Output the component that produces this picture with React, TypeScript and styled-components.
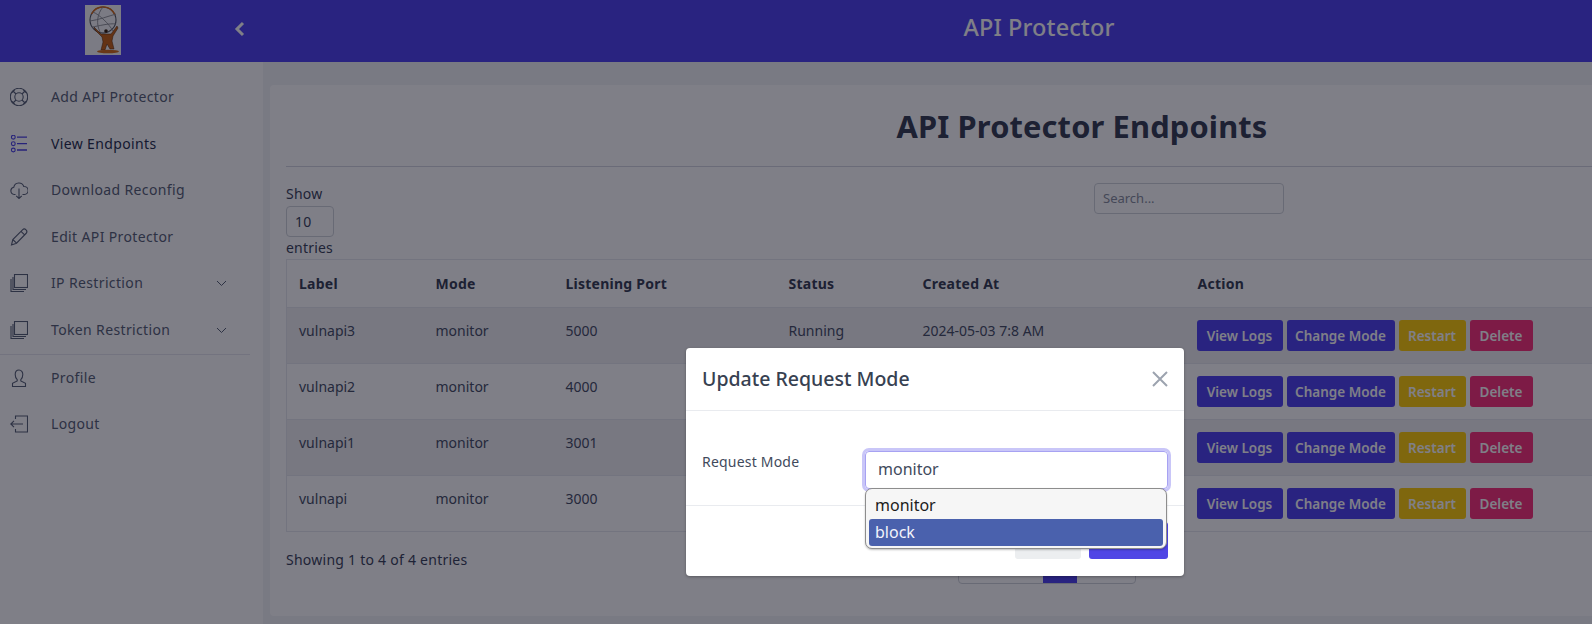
import React from "react";
import styled, { createGlobalStyle } from "styled-components";

const Global = createGlobalStyle`
  html, body { margin: 0; padding: 0; width: 1592px; height: 624px; overflow: hidden; background: #fff; }
  body { font-family: "Noto Sans", "Open Sans", sans-serif; font-size: 14px; line-height: 21px; color: #4a5568; }
  * { box-sizing: border-box; }
`;

const Page = styled.div`position: relative; width: 1592px; height: 624px; overflow: hidden;`;
const TopBar = styled.header`display: flex; align-items: stretch; height: 62px; background: #5246f0;`;
const Brand = styled.div`display: flex; align-items: center; width: 263px; padding-left: 85px;`;
const LogoMark = styled.svg`flex: none; width: 36px; height: 50px; margin-top: -2px;`;
const Collapse = styled.svg`margin-left: 113px; margin-top: -4px; width: 12px; height: 16px;`;
const AppTitle = styled.div`flex: 1; padding: 11px 0 0 223px; text-align: center; font-size: 23.5px; line-height: 32px; font-weight: 500; color: #fff; letter-spacing: .1px;`;

const Shell = styled.div`display: flex; height: 562px;`;
const Side = styled.nav`width: 263px; flex: none; padding-top: 12px; background: #fff;`;
const SideItem = styled.div<{ $active?: boolean }>`
  position: relative; display: flex; align-items: center; height: 46.6px; padding: 0 0 1.5px 51px;
  color: ${p => (p.$active ? "#2b3350" : "#5b6478")}; font-size: 14px; letter-spacing: .36px;
  svg.icon { position: absolute; left: 10px; top: 14px; width: 18px; height: 18px; fill: none;
    stroke: ${p => (p.$active ? "#4f46e5" : "#5b6478")}; stroke-width: 1.1; }
  svg.chev { position: absolute; left: 216px; top: 20px; width: 11px; height: 7px; fill: none; stroke: #5b6478; stroke-width: 1; }
`;
const SideRule = styled.div`width: 250px; height: 1px; background: #e6e7ee;`;

const Main = styled.main`flex: 1; min-width: 0; padding: 23px 0 8px 7px; background: #f3f4f7;`;
const Card = styled.section`width: 1640px; height: 531px; padding: 21px 16px 0; background: #fff; border-radius: 4px;`;
const Heading = styled.h1`margin: 0; height: 60px; width: 1592px; font-size: 30.8px; line-height: 40px; font-weight: 700; text-align: center; color: #3a4256; letter-spacing: .15px;`;
const Rule = styled.hr`margin: 0; border: 0; border-top: 1px solid #d5d7e0;`;
const Tools = styled.div`display: grid; grid-template-columns: 808px 190px; margin-top: 16px; height: 76px;`;
const Length = styled.div`color: #3f475d; letter-spacing: .2px;`;
const LengthBox = styled.div`width: 48px; height: 31px; margin: 2px 0 0; padding: 4px 8px; border: 1px solid #d1d5db; border-radius: 4px; color: #3f475d;`;
const Search = styled.div`height: 31px; padding: 4px 8px; border: 1px solid #d1d5db; border-radius: 4px; color: #8a90a0; font-size: 13px;`;

const Table = styled.table`width: 1592px; table-layout: fixed; border-collapse: collapse; border: 1px solid #e7e8ee;`;
const Th = styled.th<{ $w?: number }>`
  width: ${p => (p.$w ? `${p.$w}px` : "auto")}; padding: 13px 12px; height: 47px; text-align: left; font-weight: 700; color: #3a4256; font-size: 14px; letter-spacing: .25px; border-bottom: 1px solid #e7e8ee;
  &:last-child { padding-left: 13px; }
`;
const Tr = styled.tr<{ $odd?: boolean }>`background: ${p => (p.$odd ? "#f0f0f3" : "#fff")}; border-bottom: 1px solid #e7e8ee;`;
const Td = styled.td`padding: 12px; height: 56px; vertical-align: top; color: #4a5268; white-space: nowrap;`;
const Actions = styled.div`display: flex; gap: 4px;`;
const Btn = styled.button<{ $bg: string; $w: number }>`
  width: ${p => p.$w}px; height: 31px; border: 0; padding: 1px 0 0; border-radius: 3px; background: ${p => p.$bg}; color: #fff;
  font: 600 13.5px/31px "Noto Sans", sans-serif; flex: none;
`;
const Foot = styled.div`display: flex; align-items: flex-start; margin-top: 17px;`;
const Info = styled.div`width: 672px; color: #3f475d; letter-spacing: .25px;`;
const Pager = styled.div`display: flex; height: 34px; margin-top: 1px; border: 1px solid #d1d5db; border-radius: 4px; width: 178px; overflow: hidden; color: #4a5268; line-height: 32px; text-align: center;`;
const PageBtn = styled.div<{ $w: number; $on?: boolean }>`width: ${p => p.$w}px; background: ${p => (p.$on ? "#5246f0" : "transparent")}; color: ${p => (p.$on ? "#fff" : "inherit")};`;

const Backdrop = styled.div`position: absolute; inset: 0; background: rgba(0, 0, 16, .5);`;
const Modal = styled.div`position: absolute; left: 686px; top: 348px; width: 498px; height: 228px; background: #fff; border-radius: 4px; color: #374151; box-shadow: 0 1px 3px rgba(0,0,0,.3);`;
const ModalHead = styled.div`display: flex; align-items: center; justify-content: space-between; height: 63px; padding: 0 16px; border-bottom: 1px solid #e9ebef;`;
const ModalTitle = styled.h2`margin: 0; font-size: 19.5px; line-height: 28px; font-weight: 500; color: #374151;`;
const CloseX = styled.svg`width: 16px; height: 16px; stroke: #9ca3af; stroke-width: 2; fill: none;`;
const ModalBody = styled.div`display: grid; grid-template-columns: 163px 303px; height: 95px; padding: 40px 16px 0; border-bottom: 1px solid #e9ebef;`;
const FieldLabel = styled.label`font-size: 14px; line-height: 21px; color: #414a5c; letter-spacing: .2px;`;
const Field = styled.div`position: relative;`;
const SelectBox = styled.div`height: 38px; padding: 0 12px; border: 1px solid #a7a2f2; border-radius: 4px; box-shadow: 0 0 0 3px #c9c6f8; font-size: 16px; line-height: 35px; color: #414a5c;`;
const Menu = styled.div`position: absolute; z-index: 2; left: 0; top: 37px; width: 302px; height: 61px; padding: 3px; background: #f6f6f6; border: 1px solid #8d8d8d; border-radius: 7px; box-shadow: 0 1px 2px rgba(0,0,0,.25);`;
const MenuItem = styled.div<{ $on?: boolean }>`height: 27px; padding: 0 6px; border-radius: 3px; font-size: 16px; line-height: 26px; color: ${p => (p.$on ? "#f2f4fb" : "#1c1c1c")}; background: ${p => (p.$on ? "#4a61ad" : "transparent")};`;
const ModalFoot = styled.div`display: flex; justify-content: flex-end; gap: 8px; padding: 16px 16px 0;`;
const Plain = styled.button<{ $w: number; $bg: string }>`width: ${p => p.$w}px; height: 37px; border: 0; border-radius: 3px; background: ${p => p.$bg};`;

const Logo = () => (
  <LogoMark viewBox="0 0 36 50">
    <rect width="36" height="50" fill="#f7f7f8" />
    <circle cx="18" cy="15" r="13" fill="none" stroke="#565a64" strokeWidth="1.1" />
    <path d="M6.5 9A13 13 0 0 1 30 10" fill="none" stroke="#d9701c" strokeWidth="1.5" />
    <path d="M8 7C15 10 24 19 28 26M5 16C13 15 24 11 31 9M18 2C12 9 11 19 15 27M7 22C14 21 24 18 31 19" fill="none" stroke="#8b8d93" strokeWidth=".9" />
    <circle cx="21" cy="26" r="1.8" fill="#3a2412" />
    <path d="M9 22L16 29H26L32 21L33 23L28 31L27 36L29 44H25L22 39L20 45H16L18 37L17 32L10 25Z" fill="#c9671a" stroke="#4e2a10" strokeWidth=".5" />
    <ellipse cx="23" cy="46.5" rx="11" ry="1.8" fill="#d4711e" />
  </LogoMark>
);

const Icons: Record<string, React.ReactNode> = {
  buoy: <><circle cx="9" cy="9" r="8.7" /><circle cx="9" cy="9" r="4.2" /><path d="M3 3l3 3M15 3l-3 3M3 15l3-3M15 15l-3-3M2 4.5l2.5-2.5M13.5 2L16 4.5M2 13.5L4.5 16M13.5 16L16 13.5" /></>,
  list: <><circle cx="3.3" cy="2.2" r="1.9" /><circle cx="3.3" cy="8.7" r="1.9" /><circle cx="3.3" cy="15" r="1.9" /><path d="M7 2.2h10M7 8.7h10M7 15h10" strokeWidth="1.3" /></>,
  cloud: <><path d="M5.5 13.5H4.2A3.7 3.7 0 0 1 3.8 6.2 5.2 5.2 0 0 1 13.8 5.5 4 4 0 0 1 14.4 13.5H12.5" /><path d="M9 7.5V17.5M6.2 14.8L9 17.5L11.8 14.8" /></>,
  pencil: <path d="M1.5 17L2.8 11.5L12.5 1.8C13.5 .8 15 .8 16 1.8C17.2 3 17 4.5 16 5.5L6.5 15.2ZM2.8 11.5L6.5 15.2M11 3.3L14.6 6.9" />,
  stack: <><rect x="4.5" y=".5" width="13" height="13" /><path d="M3 3v12.5h13M1 5v12.5h13" /></>,
  user: <path d="M9 1C6.6 1 5.2 3 5.2 5.5C5.2 7.8 6.1 9.6 7.2 10.6V12L2.5 14.3V17.5H15.5V14.3L10.8 12V10.6C11.9 9.6 12.8 7.8 12.8 5.5C12.8 3 11.4 1 9 1Z" />,
  logout: <path d="M5.5 4V1H17.5V17H5.5V14M13 9H.8M4 5.8L.8 9L4 12.2" />,
};

const Nav = ({ icon, label, active, chev }: { icon: string; label: string; active?: boolean; chev?: boolean }) => (
  <SideItem $active={active}>
    <svg className="icon" viewBox="0 0 18 18">{Icons[icon]}</svg>
    {label}
    {chev && <svg className="chev" viewBox="0 0 11 7"><path d="M1 1l4.5 4.5L10 1" /></svg>}
  </SideItem>
);

const rows = [
  { label: "vulnapi3", port: "5000", status: "Running", created: "2024-05-03 7:8 AM" },
  { label: "vulnapi2", port: "4000", status: "", created: "" },
  { label: "vulnapi1", port: "3001", status: "", created: "" },
  { label: "vulnapi", port: "3000", status: "", created: "" },
];

export default function App() {
  return (
    <Page>
      <Global />
      <TopBar>
        <Brand>
          <Logo />
          <Collapse viewBox="0 0 12 16"><path d="M9 2L3 8l6 6" fill="none" stroke="#fff" strokeWidth="3" /></Collapse>
        </Brand>
        <AppTitle>API Protector</AppTitle>
      </TopBar>
      <Shell>
        <Side>
          <Nav icon="buoy" label="Add API Protector" />
          <Nav icon="list" label="View Endpoints" active />
          <Nav icon="cloud" label="Download Reconfig" />
          <Nav icon="pencil" label="Edit API Protector" />
          <Nav icon="stack" label="IP Restriction" chev />
          <Nav icon="stack" label="Token Restriction" chev />
          <SideRule />
          <Nav icon="user" label="Profile" />
          <Nav icon="logout" label="Logout" />
        </Side>
        <Main>
          <Card>
            <Heading>API Protector Endpoints</Heading>
            <Rule />
            <Tools>
              <Length>
                Show
                <LengthBox>10</LengthBox>
                entries
              </Length>
              <Search>Search...</Search>
            </Tools>
            <Table>
              <thead>
                <tr>
                  <Th $w={137}>Label</Th>
                  <Th $w={130}>Mode</Th>
                  <Th $w={223}>Listening Port</Th>
                  <Th $w={134}>Status</Th>
                  <Th $w={274}>Created At</Th>
                  <Th>Action</Th>
                </tr>
              </thead>
              <tbody>
                {rows.map((r, i) => (
                  <Tr key={r.label} $odd={i % 2 === 0}>
                    <Td>{r.label}</Td>
                    <Td>monitor</Td>
                    <Td>{r.port}</Td>
                    <Td>{r.status}</Td>
                    <Td>{r.created}</Td>
                    <Td>
                      <Actions>
                        <Btn $bg="#5246f0" $w={86}>View Logs</Btn>
                        <Btn $bg="#5246f0" $w={108}>Change Mode</Btn>
                        <Btn $bg="#fece0c" $w={67}>Restart</Btn>
                        <Btn $bg="#fa367c" $w={63}>Delete</Btn>
                      </Actions>
                    </Td>
                  </Tr>
                ))}
              </tbody>
            </Table>
            <Foot>
              <Info>Showing 1 to 4 of 4 entries</Info>
              <Pager>
                <PageBtn $w={84} />
                <PageBtn $w={34} $on />
                <PageBtn $w={58} />
              </Pager>
            </Foot>
          </Card>
        </Main>
      </Shell>
      <Backdrop />
      <Modal>
        <ModalHead>
          <ModalTitle>Update Request Mode</ModalTitle>
          <CloseX viewBox="0 0 16 16"><path d="M1 1l14 14M15 1L1 15" /></CloseX>
        </ModalHead>
        <ModalBody>
          <FieldLabel>Request Mode</FieldLabel>
          <Field>
            <SelectBox>monitor</SelectBox>
            <Menu>
              <MenuItem>monitor</MenuItem>
              <MenuItem $on>block</MenuItem>
            </Menu>
          </Field>
        </ModalBody>
        <ModalFoot>
          <Plain $w={66} $bg="#eceef0" />
          <Plain $w={79} $bg="#5046e5" />
        </ModalFoot>
      </Modal>
    </Page>
  );
}
